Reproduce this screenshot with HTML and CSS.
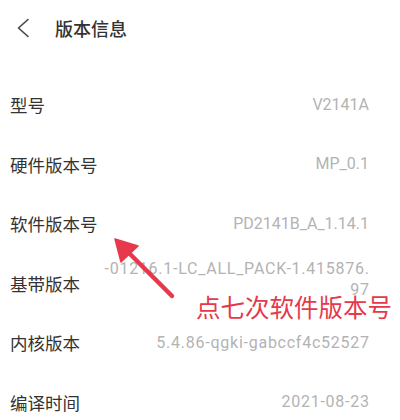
FILE: index.html
```html
<!DOCTYPE html>
<html lang="zh-CN">
<head>
<meta charset="utf-8">
<link rel="stylesheet" href="styles.css">
</head>
<body>
<div class="page">
  <header class="topbar">
    <svg class="back" width="14" height="20" viewBox="0 0 14 20"><polyline points="12,1.5 2.5,10 12,18.5" fill="none" stroke="#444" stroke-width="1.6" stroke-linecap="round" stroke-linejoin="round"/></svg>
    <span class="title">版本信息</span>
  </header>
  <div class="list">
    <div class="row"><span class="label">型号</span><span class="value">V2141A</span></div>
    <div class="row"><span class="label">硬件版本号</span><span class="value">MP_0.1</span></div>
    <div class="row"><span class="label">软件版本号</span><span class="value">PD2141B_A_1.14.1</span></div>
    <div class="row"><span class="label">基带版本</span><span class="value wide multi">-01216.1-LC_ALL_PACK-1.415876.<br>97</span></div>
    <div class="row"><span class="label">内核版本</span><span class="value wide">5.4.86-qgki-gabccf4c52527</span></div>
    <div class="row"><span class="label">编译时间</span><span class="value wide">2021-08-23</span></div>
  </div>
  <svg class="arrow" width="400" height="420" viewBox="0 0 400 420">
    <line x1="172" y1="296" x2="127" y2="251" stroke="#e7384c" stroke-width="4.5" stroke-linecap="round"/>
    <polygon points="115,239 138,246 121,262" fill="#e7384c" stroke="#e7384c" stroke-width="1.5" stroke-linejoin="round"/>
  </svg>
  <div class="note">点七次软件版本号</div>
</div>
</body>
</html>
```
FILE: styles.css
```css
html, body {
  margin: 0;
  padding: 0;
  background: #ffffff;
}
.page {
  position: relative;
  width: 400px;
  height: 420px;
  overflow: hidden;
  font-family: "Noto Sans CJK SC", sans-serif;
}
.topbar {
  height: 56px;
  display: flex;
  align-items: center;
  padding-left: 16px;
  box-sizing: border-box;
}
.back {
  display: block;
}
.title {
  margin-left: 25px;
  font-size: 18px;
  font-weight: 500;
  color: #333333;
  line-height: 1;
}
.list {
  padding-top: 19px;
}
.row {
  height: 59.5px;
  display: flex;
  align-items: center;
  justify-content: space-between;
  padding: 0 31px 0 10px;
}
.label {
  font-size: 17.5px;
  color: #333333;
  line-height: 1;
  white-space: nowrap;
}
.value {
  font-family: Roboto, "Liberation Sans", sans-serif;
  font-size: 16px;
  color: #b3b3b3;
  text-align: right;
  white-space: nowrap;
  line-height: 1;
}
.value.wide {
  letter-spacing: 0.75px;
  margin-right: -0.75px;
}
.value.multi {
  line-height: 21px;
  margin-bottom: 8px;
}
.arrow {
  position: absolute;
  left: 0;
  top: 0;
}
.note {
  position: absolute;
  left: 196px;
  top: 293px;
  font-size: 24.5px;
  line-height: 28px;
  color: #e5394b;
  white-space: nowrap;
}
```
